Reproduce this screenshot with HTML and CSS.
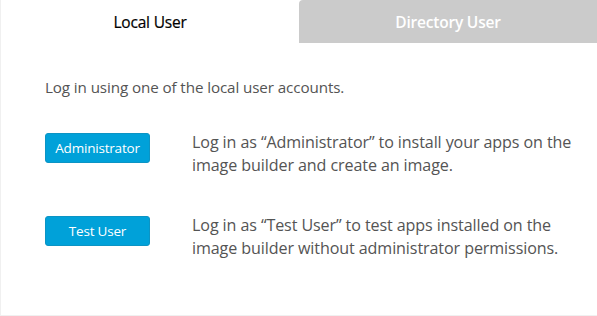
FILE: index.html
```html
<!DOCTYPE html>
<html>
<head>
<meta charset="utf-8">
<link rel="stylesheet" href="styles.css">
</head>
<body>
<div class="panel">
  <div class="tabs">
    <div class="tab active">Local User</div>
    <div class="tab inactive">Directory User</div>
  </div>
  <div class="content">
    <p class="intro">Log in using one of the local user accounts.</p>
    <div class="row">
      <div class="btn-col"><button class="btn">Administrator</button></div>
      <p class="desc">Log in as “Administrator” to install your apps on the image builder and create an image.</p>
    </div>
    <div class="row">
      <div class="btn-col"><button class="btn">Test User</button></div>
      <p class="desc">Log in as “Test User” to test apps installed on the image builder without administrator permissions.</p>
    </div>
  </div>
</div>
</body>
</html>
```
FILE: styles.css
```css
html, body {
  margin: 0;
  padding: 0;
  background: #fff;
}
body {
  font-family: "Open Sans", "Liberation Sans", sans-serif;
  width: 597px;
  height: 316px;
  overflow: hidden;
}
.panel {
  height: 316px;
  box-sizing: border-box;
  border-left: 1px solid #f0f0f0;
  border-bottom: 1px solid #f0f0f0;
}
.tabs {
  display: flex;
  height: 43px;
}
.tab {
  flex: 1;
  display: flex;
  align-items: center;
  justify-content: center;
  font-size: 15.5px;
  letter-spacing: -0.2px;
}
.tab.active {
  color: #000;
  background: #fff;
  font-weight: 500;
  -webkit-text-stroke: 0.2px #000;
}
.tab.inactive {
  color: #fff;
  background: #cbcbcb;
  border-radius: 4px 0 0 0;
  font-weight: 600;
}
.content {
  padding: 33px 0 0 44px;
}
.intro {
  margin: 0 0 31px 0;
  font-size: 15.2px;
  line-height: 22px;
  color: #545454;
  letter-spacing: -0.1px;
}
.row {
  display: flex;
  align-items: flex-start;
  margin-bottom: 35px;
}
.btn-col {
  width: 147px;
  flex: none;
  padding-top: 4px;
}
.btn {
  width: 105px;
  height: 30px;
  box-sizing: border-box;
  background: #00a1d9;
  border: 1px solid #0c94c4;
  border-radius: 3px;
  color: #fff;
  font-family: "Open Sans", "Liberation Sans", sans-serif;
  font-size: 13.5px;
  letter-spacing: -0.2px;
  padding: 0;
}
.desc {
  margin: 0;
  padding-top: 2px;
  width: 392px;
  font-size: 16.1px;
  line-height: 23px;
  color: #545454;
  letter-spacing: -0.1px;
}
```
